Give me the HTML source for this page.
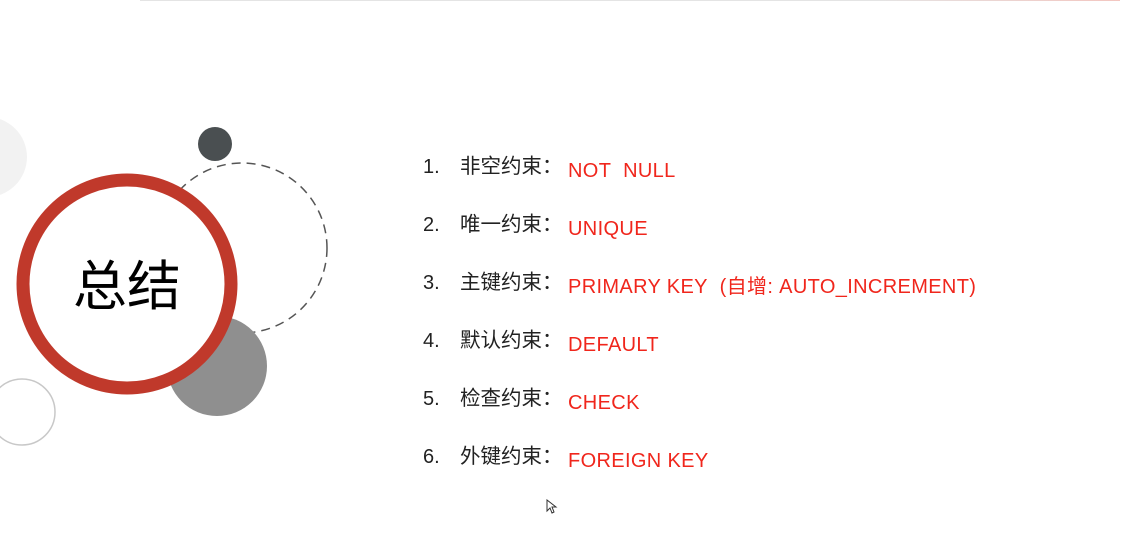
<!DOCTYPE html>
<html><head><meta charset="utf-8"><style>
body{margin:0;width:1140px;height:550px;background:#fff;overflow:hidden;position:relative;font-family:"Liberation Sans","Noto Sans CJK SC",sans-serif}
.row{position:absolute;left:423px;font-size:20px;color:#222;height:30px;line-height:30px;white-space:nowrap}
.row .n{position:absolute;left:0}
.row .c{position:absolute;left:37px;font-size:20.5px}
.row .r{position:absolute;left:145px;color:#f0261c;top:4px;letter-spacing:0.35px}
</style></head><body>
<div style="position:absolute;left:140px;top:0;width:980px;height:1px;background:linear-gradient(90deg,#e4e4e4,#e4e4e4 75%,#f3c6c0)"></div>
<svg width="340" height="460" style="position:absolute;left:0;top:0">
<circle cx="-13" cy="157" r="40" fill="#f2f2f2"/>
<circle cx="242" cy="248" r="85" fill="none" stroke="#555" stroke-width="1.5" stroke-dasharray="9 6"/>
<circle cx="215" cy="144" r="17" fill="#4a4f51"/>
<circle cx="217" cy="366" r="50" fill="#8f8f8f"/>
<circle cx="22" cy="412" r="33" fill="none" stroke="#c8c8c8" stroke-width="1.5"/>
<circle cx="127" cy="284" r="104" fill="#fff" stroke="#c0392b" stroke-width="13"/>
<text x="127" y="305" text-anchor="middle" font-size="54" font-family="Noto Sans CJK SC,sans-serif" fill="#000">总结</text>
</svg>
<div class="row" style="top:152px"><span class="n">1.</span><span class="c">非空约束：</span><span class="r">NOT&nbsp; NULL</span></div>
<div class="row" style="top:210px"><span class="n">2.</span><span class="c">唯一约束：</span><span class="r">UNIQUE</span></div>
<div class="row" style="top:268px"><span class="n">3.</span><span class="c">主键约束：</span><span class="r">PRIMARY KEY&nbsp; (自增: AUTO_INCREMENT)</span></div>
<div class="row" style="top:326px"><span class="n">4.</span><span class="c">默认约束：</span><span class="r">DEFAULT</span></div>
<div class="row" style="top:384px"><span class="n">5.</span><span class="c">检查约束：</span><span class="r">CHECK</span></div>
<div class="row" style="top:442px"><span class="n">6.</span><span class="c">外键约束：</span><span class="r">FOREIGN KEY</span></div>
<svg width="12" height="16" style="position:absolute;left:546px;top:499px"><path d="M1 1 L1 12 L4 9 L6 14 L8 13 L6 8 L10 8 Z" fill="#fff" stroke="#333" stroke-width="1"/></svg>
</body></html>
